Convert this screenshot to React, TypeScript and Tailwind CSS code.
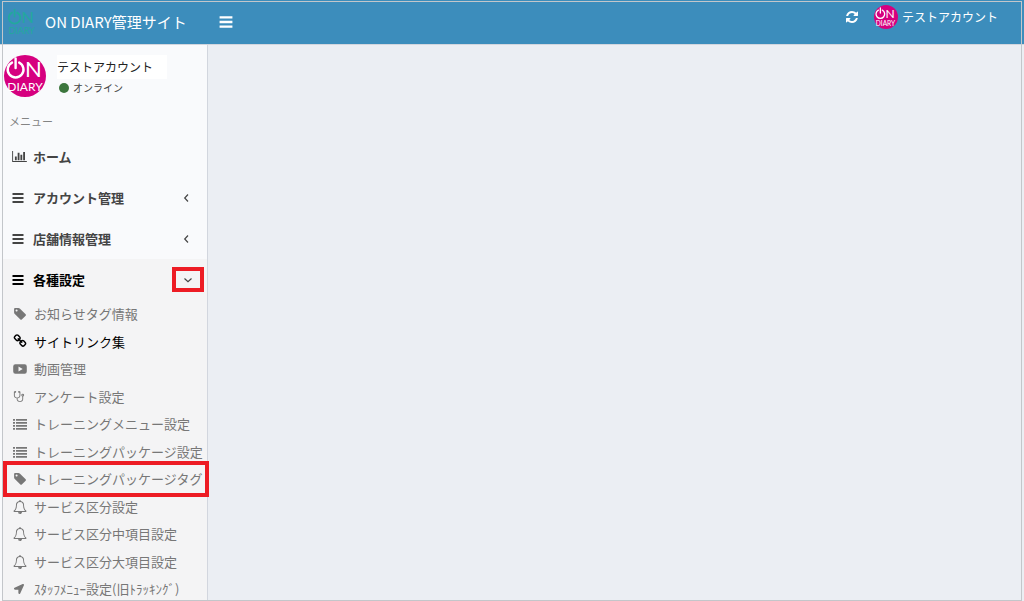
import React from "react";
import { FaLocationArrow } from "react-icons/fa";

interface IconProps {
  className?: string;
}

interface SubItem {
  label: string;
  icon: React.FC<IconProps>;
  size: string;
  current?: boolean;
  marked?: boolean;
}

const BarsIcon: React.FC<IconProps> = ({ className }) => (
  <svg viewBox="0 0 12 12" fill="currentColor" className={className}>
    <path d="M.5 1h11v2H.5zM.5 5h11v2H.5zM.5 9h11v2H.5z" />
  </svg>
);

const ChartIcon: React.FC<IconProps> = ({ className }) => (
  <svg viewBox="0 0 2048 1536" fill="currentColor" className={className}>
    <path d="M640 768v512h-256v-512h256zm384-512v1024h-256v-1024h256zm1024 1152v128h-2048v-1536h128v1408h1920zm-640-896v768h-256v-768h256zm384-384v1152h-256v-1152h256z" />
  </svg>
);

const RefreshIcon: React.FC<IconProps> = ({ className }) => (
  <svg viewBox="0 0 1536 1792" fill="currentColor" className={className}>
    <path d="M1511 1056q0 5-1 7-64 268-268 434.5t-478 166.5q-146 0-282.5-55t-243.5-157l-129 129q-19 19-45 19t-45-19-19-45v-448q0-26 19-45t45-19h448q26 0 45 19t19 45-19 45l-137 137q71 66 161 102t187 36q134 0 250-65t186-179q11-17 53-117 8-23 30-23h192q13 0 22.5 9.5t9.5 22.5zm25-800v448q0 26-19 45t-45 19h-448q-26 0-45-19t-19-45 19-45l138-138q-148-137-349-137-134 0-250 65t-186 179q-11 17-53 117-8 23-30 23h-199q-13 0-22.5-9.5t-9.5-22.5v-7q65-268 270-434.5t480-166.5q146 0 284 55.5t245 156.5l130-129q19-19 45-19t45 19 19 45z" />
  </svg>
);

const TagIcon: React.FC<IconProps> = ({ className }) => (
  <svg viewBox="0 0 1515 1792" fill="currentColor" className={className}>
    <path d="M448 448q0-53-37.5-90.5t-90.5-37.5-90.5 37.5-37.5 90.5 37.5 90.5 90.5 37.5 90.5-37.5 37.5-90.5zm1067 576q0 53-37 90l-491 492q-39 37-91 37-53 0-90-37l-715-716q-38-37-64.5-101t-26.5-117v-416q0-52 38-90t90-38h416q53 0 117 26.5t102 64.5l715 714q37 39 37 91z" />
  </svg>
);

const LinkIcon: React.FC<IconProps> = ({ className }) => (
  <svg viewBox="0 0 1664 1792" fill="currentColor" className={className}>
    <path d="M1456 1216q0-40-28-68l-208-208q-28-28-68-28-42 0-72 32 3 3 19 18.5t21.5 21.5 15 19 13 25.5 3.5 27.5q0 40-28 68t-68 28q-15 0-27.5-3.5t-25.5-13-19-15-21.5-21.5-18.5-19q-33 31-33 73 0 40 28 68l206 207q27 27 68 27 40 0 68-26l147-146q28-28 28-67zm-703-705q0-40-28-68l-206-207q-28-28-68-28-39 0-68 27l-147 146q-28 28-28 67 0 40 28 68l208 208q27 27 68 27 42 0 72-31-3-3-19-18.5t-21.5-21.5-15-19-13-25.5-3.5-27.5q0-40 28-68t68-28q15 0 27.5 3.5t25.5 13 19 15 21.5 21.5 18.5 19q33-31 33-73zm895 705q0 120-85 203l-147 146q-83 83-203 83-121 0-204-85l-206-207q-83-83-83-203 0-123 88-209l-88-88q-86 88-208 88-120 0-204-84l-208-208q-84-84-84-204t85-203l147-146q83-83 203-83 121 0 204 85l206 207q83 83 83 203 0 123-88 209l88 88q86-88 208-88 120 0 204 84l208 208q84 84 84 204z" />
  </svg>
);

const VideoIcon: React.FC<IconProps> = ({ className }) => (
  <svg viewBox="0 0 14 14" fill="currentColor" className={className}>
    <path
      fillRule="evenodd"
      d="M2.4 2.2h9.2a2.2 2.2 0 0 1 2.2 2.2v5.2a2.2 2.2 0 0 1-2.2 2.2H2.4A2.2 2.2 0 0 1 .2 9.6V4.4a2.2 2.2 0 0 1 2.2-2.2zM5.5 4.6v4.8L9.7 7z"
    />
  </svg>
);

const StethoscopeIcon: React.FC<IconProps> = ({ className }) => (
  <svg viewBox="0 0 1408 1792" fill="currentColor" className={className}>
    <path d="M1280 704q0-26-19-45t-45-19-45 19-19 45 19 45 45 19 45-19 19-45zm128 0q0 62-35.5 111t-92.5 70v395q0 159-131.5 271.5t-316.5 112.5-316.5-112.5-131.5-271.5v-132q-164-20-274-128t-110-252v-512q0-26 19-45t45-19q6 0 16 2 17-30 47-48t65-18q53 0 90.5 37.5t37.5 90.5-37.5 90.5-90.5 37.5q-33 0-64-18v402q0 106 94 181t226 75 226-75 94-181v-402q-31 18-64 18-53 0-90.5-37.5t-37.5-90.5 37.5-90.5 90.5-37.5q35 0 65 18t47 48q10-2 16-2 26 0 45 19t19 45v512q0 144-110 252t-274 128v132q0 106 94 181t226 75 226-75 94-181v-395q-57-21-92.5-70t-35.5-111q0-80 56-136t136-56 136 56 56 136z" />
  </svg>
);

const ListIcon: React.FC<IconProps> = ({ className }) => (
  <svg viewBox="0 0 14 14" fill="currentColor" className={className}>
    <path d="M0 2h2v1.8H0zM3 2h11v1.8H3zM0 5h2v1.8H0zM3 5h11v1.8H3zM0 8h2v1.8H0zM3 8h11v1.8H3zM0 11h2v1.8H0zM3 11h11v1.8H3z" />
  </svg>
);

const BellIcon: React.FC<IconProps> = ({ className }) => (
  <svg viewBox="0 0 1792 1792" fill="currentColor" className={className}>
    <path d="M912 1696q0-16-16-16-59 0-101.5-42.5t-42.5-101.5q0-16-16-16t-16 16q0 73 51.5 124.5t124.5 51.5q16 0 16-16zm-666-288h1300q-266-300-266-832 0-51-24-105t-69-103-121.5-80.5-169.5-31.5-169.5 31.5-121.5 80.5-69 103-24 105q0 532-266 832zm1482 0q0 52-38 90t-90 38h-448q0 106-75 181t-181 75-181-75-75-181h-448q-52 0-90-38t-38-90q50-42 91-88t85-119.5 74.5-158.5 50-206 19.5-260q0-152 117-282.5t307-158.5q-8-19-8-39 0-40 28-68t68-28 68 28 28 68q0 20-8 39 190 28 307 158.5t117 282.5q0 139 19.5 260t50 206 74.5 158.5 85 119.5 91 88z" />
  </svg>
);

const Chevron: React.FC<{ open?: boolean }> = ({ open }) => (
  <svg
    viewBox="0 0 10 10"
    fill="none"
    stroke="currentColor"
    strokeWidth="1.2"
    className="h-2.5 w-2.5"
  >
    <path d={open ? "M1.5 3.5L5 6.8l3.5-3.3" : "M7 1.5L3.7 5L7 8.5"} />
  </svg>
);

// Power symbol for the O, with the rest of the name set as text
const Logo: React.FC<IconProps> = ({ className }) => (
  <svg viewBox="0 0 42 42" className={className} role="img" aria-label="ON DIARY">
    <g fill="none" stroke="currentColor" strokeWidth="2.4" strokeLinecap="round">
      <path d="M8 7.6a7.9 7.9 0 1 0 7.2 0" />
      <path d="M11.6 3.5v9.5" />
    </g>
    <g fill="currentColor" fontFamily="Lato, 'Liberation Sans', sans-serif">
      <text x="21" y="22" fontSize="22">
        N
      </text>
      <text x="21" y="36" fontSize="12" textAnchor="middle">
        DIARY
      </text>
    </g>
  </svg>
);

const menu = [
  { label: "ホーム", icon: ChartIcon, size: "h-[11px] w-[15px]", arrow: false },
  { label: "アカウント管理", icon: BarsIcon, size: "h-3 w-3", arrow: true },
  { label: "店舗情報管理", icon: BarsIcon, size: "h-3 w-3", arrow: true },
];

const subMenu: SubItem[] = [
  { label: "お知らせタグ情報", icon: TagIcon, size: "h-3.5 w-3.5" },
  { label: "サイトリンク集", icon: LinkIcon, size: "h-3.5 w-3.5", current: true },
  { label: "動画管理", icon: VideoIcon, size: "h-3.5 w-3.5" },
  { label: "アンケート設定", icon: StethoscopeIcon, size: "h-[13px] w-3" },
  { label: "トレーニングメニュー設定", icon: ListIcon, size: "h-3.5 w-3.5" },
  { label: "トレーニングパッケージ設定", icon: ListIcon, size: "h-3.5 w-3.5" },
  { label: "トレーニングパッケージタグ", icon: TagIcon, size: "h-3.5 w-3.5", marked: true },
  { label: "サービス区分設定", icon: BellIcon, size: "h-3.5 w-3.5" },
  { label: "サービス区分中項目設定", icon: BellIcon, size: "h-3.5 w-3.5" },
  { label: "サービス区分大項目設定", icon: BellIcon, size: "h-3.5 w-3.5" },
  { label: "ｽﾀｯﾌﾒﾆｭｰ設定(旧ﾄﾗｯｷﾝｸﾞ)", icon: FaLocationArrow, size: "h-2.5 w-3" },
];

const Header: React.FC = () => (
  <header className="flex h-11 items-center bg-[#3c8dbc] pl-1.5 pr-[26px] text-white">
    <a href="#" className="flex items-center gap-2">
      <Logo className="h-[31px] w-[31px] text-[#22a99d]" />
      <span className="text-[15px]">ON DIARY管理サイト</span>
    </a>
    <button type="button" aria-label="メニュー" className="ml-8">
      <BarsIcon className="h-3.5 w-3.5" />
    </button>
    <div className="mb-2.5 ml-auto flex items-center">
      <button type="button" aria-label="更新" className="mr-4">
        <RefreshIcon className="h-3.5 w-3" />
      </button>
      <a href="#" className="flex items-center gap-1">
        <span className="flex h-6 w-6 items-center justify-center rounded-full bg-[#d6007f]">
          <Logo className="h-[23px] w-[23px]" />
        </span>
        <span className="text-xs">テストアカウント</span>
      </a>
    </div>
  </header>
);

const Sidebar: React.FC = () => (
  <aside className="flex w-[208px] shrink-0 flex-col border-r border-[#d2d6de] bg-[#f9fafc] pl-0.5 text-[13px] text-[#444]">
    <div className="flex items-center gap-[11px] pl-0.5 pt-2.5">
      <span className="flex h-[42px] w-[42px] shrink-0 items-center justify-center rounded-full bg-[#d6007f] text-white">
        <Logo className="h-[42px] w-[42px]" />
      </span>
      <div>
        <p className="w-[110px] bg-white text-xs leading-6 text-[#222]">
          テストアカウント
        </p>
        <p className="flex items-center gap-1 pl-0.5 text-[10px] leading-[18px] text-[#444]">
          <span className="h-2.5 w-2.5 rounded-full bg-[#3c763d]"></span>
          オンライン
        </p>
      </div>
    </div>
    <p className="mt-3.5 pl-[7px] text-[11px] leading-5 text-[#848484]">
      メニュー
    </p>
    <nav className="flex flex-1 flex-col pt-[5px]">
      <ul>
        {menu.map(({ label, icon: Icon, size, arrow }) => (
          <li key={label}>
            <a
              href="#"
              className="flex h-[41px] items-center pl-2.5 pr-4 font-bold"
            >
              <span className="w-[21px]">
                <Icon className={size} />
              </span>
              {label}
              {arrow && (
                <span className="ml-auto">
                  <Chevron />
                </span>
              )}
            </a>
          </li>
        ))}
      </ul>
      <div className="flex flex-1 flex-col bg-[#f4f4f5]">
        <a
          href="#"
          className="flex h-[41px] items-center pl-2.5 pr-[3px] font-bold text-black"
        >
          <span className="w-[21px]">
            <BarsIcon className="h-3 w-3" />
          </span>
          各種設定
          <span className="ml-auto flex h-[25px] w-8 items-center justify-center border-4 border-[#ed1c24] text-[#444]">
            <Chevron open />
          </span>
        </a>
        <ul className="-mb-0.5 flex flex-1 flex-col text-[#777]">
          {subMenu.map(({ label, icon: Icon, size, current, marked }) => (
            <li key={label} className="relative flex min-h-[27px] flex-1">
              <a
                href="#"
                className={
                  current
                    ? "flex items-center whitespace-nowrap pl-2.5 text-black"
                    : "flex items-center whitespace-nowrap pl-2.5"
                }
              >
                <span className="flex w-[22px] pl-px">
                  <Icon className={size} />
                </span>
                {label}
              </a>
              {marked && (
                <span className="pointer-events-none absolute -inset-y-1 -right-0.5 left-px z-20 border-4 border-[#ed1c24]"></span>
              )}
            </li>
          ))}
        </ul>
      </div>
    </nav>
  </aside>
);

const App: React.FC = () => {
  return (
    <div className="relative flex min-h-screen flex-col overflow-hidden bg-[#ebeef3] font-['Noto_Sans_CJK_JP',sans-serif]">
      <Header />
      <div className="flex flex-1 border-t border-[#d2d6de]">
        <Sidebar />
        <main className="flex-1"></main>
      </div>
      <div className="pointer-events-none absolute bottom-0 left-0.5 right-0.5 top-px z-10 border border-[#c3c6ca]"></div>
    </div>
  );
};

export default App;
